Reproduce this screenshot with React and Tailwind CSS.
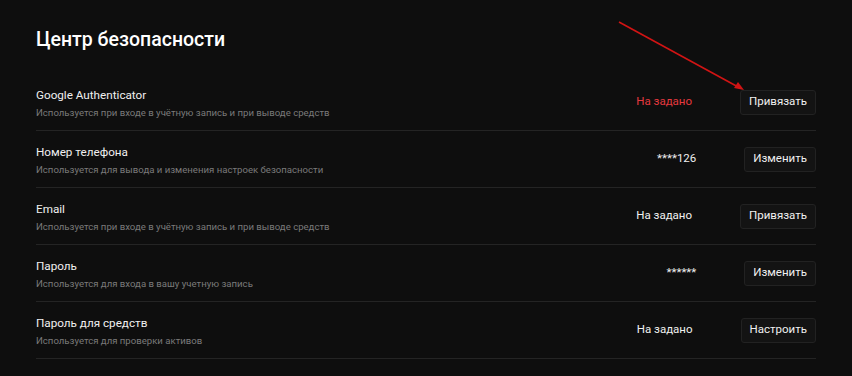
import React from 'react';

const rows = [
  {
    title: 'Google Authenticator',
    hint: 'Используется при входе в учётную запись и при выводе средств',
    value: 'На задано',
    danger: true,
    action: 'Привязать',
  },
  {
    title: 'Номер телефона',
    hint: 'Используется для вывода и изменения настроек безопасности',
    value: '****126',
    action: 'Изменить',
  },
  {
    title: 'Email',
    hint: 'Используется при входе в учётную запись и при выводе средств',
    value: 'На задано',
    action: 'Привязать',
  },
  {
    title: 'Пароль',
    hint: 'Используется для входа в вашу учетную запись',
    value: '******',
    action: 'Изменить',
  },
  {
    title: 'Пароль для средств',
    hint: 'Используется для проверки активов',
    value: 'На задано',
    action: 'Настроить',
  },
];

function SecurityRow({ title, hint, value, danger, action }) {
  return (
    <div className="flex h-[57px] items-center border-b border-[#242424]">
      <div className="flex min-w-0 flex-1 flex-col gap-[3px] pt-[2px]">
        <p className="text-[11.7px] leading-[15px] text-[#f0f0f0]">{title}</p>
        <p className="text-[9.6px] leading-[13px] text-[#7a7a7a]">{hint}</p>
      </div>
      <span className={`text-[11.5px] ${danger ? 'text-[#e5393f]' : 'text-[#f0f0f0]'}`}>{value}</span>
      <button
        type="button"
        className="ml-12 h-[25px] rounded-[3px] border border-[#222] bg-[#131313] px-[8px] text-[11.5px] text-[#f0f0f0]"
      >
        {action}
      </button>
    </div>
  );
}

export default function App() {
  return (
    <div
      className="relative h-[376px] w-[852px] overflow-hidden bg-[#0e0e0e] px-9"
      style={{ fontFamily: 'Roboto, "Noto Sans", sans-serif' }}
    >
      <h1 className="pt-[26px] pb-[21px] text-[19.5px] font-medium leading-[28px] text-white">Центр безопасности</h1>
      <div className="-mt-[1px]">
        {rows.map((r) => (
          <SecurityRow key={r.title} {...r} />
        ))}
      </div>

      {/* annotation arrow */}
      <svg className="absolute left-0 top-0" width="852" height="376" viewBox="0 0 852 376" fill="none">
        <line x1="619" y1="22" x2="740" y2="88" stroke="#d11414" strokeWidth="1.6" />
        <path d="M744 90 L734 88 L738 82 Z" fill="#d11414" />
      </svg>
    </div>
  );
}
